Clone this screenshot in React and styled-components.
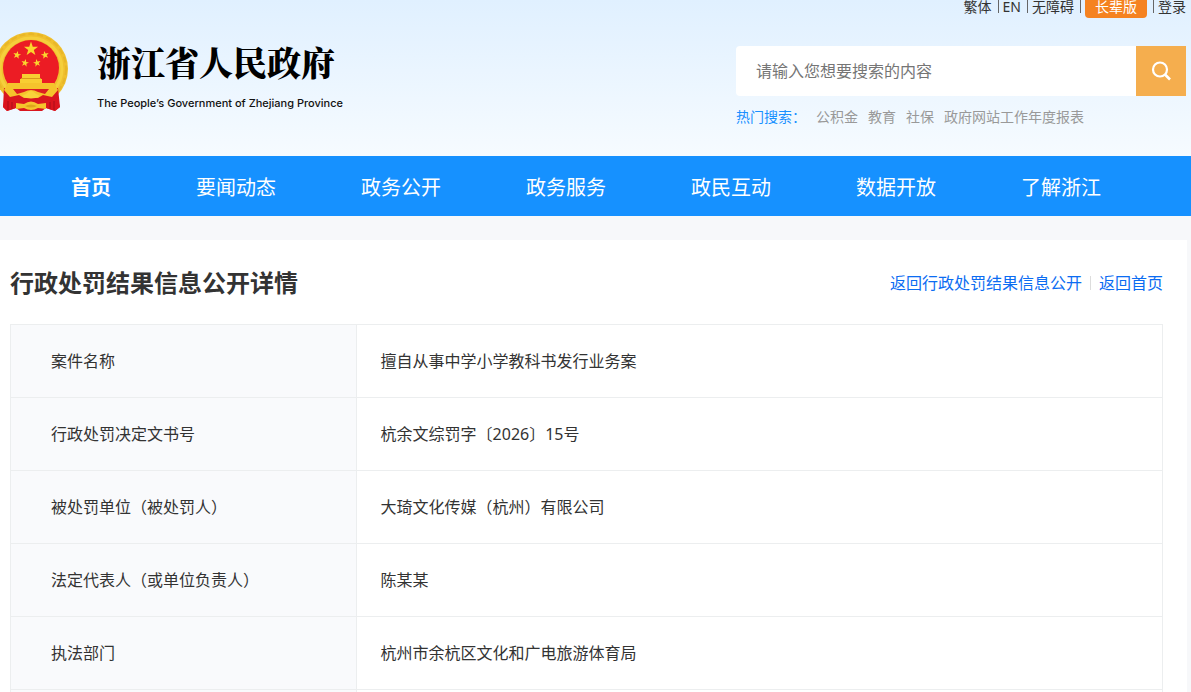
import { useState } from "react";
import styled, { createGlobalStyle } from "styled-components";

const GlobalStyle = createGlobalStyle`
  * {
    box-sizing: border-box;
  }
  body {
    margin: 0;
    background: #f7f8fa;
    color: #333;
    font-family: "Noto Sans", "Noto Sans CJK SC", sans-serif;
    font-size: 16px;
  }
  a {
    color: inherit;
    text-decoration: none;
  }
`;

const Header = styled.header`
  display: flex;
  justify-content: space-between;
  height: 156px;
  padding-right: 5px;
  background: linear-gradient(#e0f0ff, #f6fbff);
`;

const Brand = styled.a`
  display: flex;
  gap: 28px;
  padding-top: 32px;
`;

const BrandText = styled.div`
  display: flex;
  flex-direction: column;
  gap: 12px;
  padding-top: 7px;
  color: #000;
`;

const SiteName = styled.span`
  font-family: "Noto Serif CJK SC", "Liberation Serif", "Noto Sans CJK SC", serif;
  font-size: 34px;
  font-weight: 900;
  line-height: 46px;
`;

const SiteNameEn = styled.span`
  font-family: Inter, "Liberation Sans", sans-serif;
  font-size: 11px;
  font-weight: 500;
  line-height: 12px;
  color: #111;
`;

const HeaderSide = styled.div`
  display: flex;
  flex-direction: column;
  width: 450px;
`;

const TopLinks = styled.div`
  display: flex;
  justify-content: flex-end;
  height: 46px;
  font-size: 14px;
  line-height: 14px;
`;

const TopDivider = styled.i`
  width: 1px;
  height: 13px;
  margin: 0 4px 0 6px;
  background: #666;
`;

const ElderLink = styled.a`
  height: 18px;
  padding: 0 10px;
  border-radius: 0 0 4px 4px;
  background: #f58220;
  color: #fff;
`;

const SearchForm = styled.form`
  display: flex;
  height: 50px;
`;

const SearchInput = styled.input`
  flex: 1;
  min-width: 0;
  padding: 0 20px;
  border: 0;
  border-radius: 4px 0 0 4px;
  outline: 0;
  background: #fff;
  font: inherit;
  &::placeholder {
    color: #757575;
  }
`;

const SearchButton = styled.button`
  display: flex;
  align-items: center;
  justify-content: center;
  width: 50px;
  padding: 0;
  border: 0;
  background: #f5ae4e;
  cursor: pointer;
`;

const HotWords = styled.div`
  display: flex;
  gap: 10px;
  padding-top: 11px;
  color: #999;
  font-size: 14px;
  line-height: 20px;
`;

const HotLabel = styled.span`
  color: #1890ff;
`;

const Nav = styled.nav`
  display: flex;
  gap: 85px;
  padding: 4px 0 0 71px;
  background: #1691ff;
`;

const NavLink = styled.a`
  color: #fff;
  font-size: 20px;
  font-weight: ${({ $active }) => ($active ? 700 : 400)};
  line-height: 56px;
  white-space: nowrap;
`;

const Content = styled.main`
  margin: 24px 4px 0 0;
  padding: 0 24px 0 10px;
  background: #fff;
`;

const TitleBar = styled.div`
  display: flex;
  align-items: center;
  justify-content: space-between;
  height: 84px;
  padding-top: 2px;
`;

const Title = styled.h1`
  margin: 0;
  font-size: 24px;
  line-height: 36px;
`;

const BackLinks = styled.div`
  display: flex;
  align-items: center;
  gap: 8px;
  color: #0b6cf2;
  line-height: 24px;
`;

const BackDivider = styled.i`
  width: 1px;
  height: 14px;
  background: #ddd;
`;

const Table = styled.table`
  width: 100%;
  border-collapse: collapse;
  table-layout: fixed;
`;

const Label = styled.th`
  width: 30%;
  height: ${({ $blank }) => ($blank ? "2px" : "73px")};
  padding: 0 40px 2px;
  border: 1px solid #eceeef;
  border-bottom-width: ${({ $blank }) => ($blank ? 0 : "1px")};
  background: #f9fafc;
  font-weight: 400;
  text-align: left;
`;

const Value = styled.td`
  padding: 0 24px 2px;
  border: 1px solid #eceeef;
  border-bottom-width: ${({ $blank }) => ($blank ? 0 : "1px")};
`;

const NAV_ITEMS = ["首页", "要闻动态", "政务公开", "政务服务", "政民互动", "数据开放", "了解浙江"];
const HOT_WORDS = ["公积金", "教育", "社保", "政府网站工作年度报表"];
const DETAILS = [
  ["案件名称", "擅自从事中学小学教科书发行业务案"],
  ["行政处罚决定文书号", "杭余文综罚字〔2026〕15号"],
  ["被处罚单位（被处罚人）", "大琦文化传媒（杭州）有限公司"],
  ["法定代表人（或单位负责人）", "陈某某"],
  ["执法部门", "杭州市余杭区文化和广电旅游体育局"],
  ["", ""],
];

const STAR = "M0-10 2.4-3.1 9.5-3.1 3.8 1.2 5.9 8.1 0 4-5.9 8.1-3.8 1.2-9.5-3.1-2.4-3.1Z";

function Emblem() {
  return (
    <svg width="69" height="80" viewBox="0 0 69 80" aria-hidden="true">
      <circle cx="31" cy="37" r="37" fill="#f0c02e" />
      <circle cx="31" cy="37" r="35" fill="none" stroke="#e8b628" strokeWidth="2" strokeDasharray="6 3" />
      <circle cx="31" cy="37" r="31" fill="none" stroke="#f5cf3c" strokeWidth="3" />
      <circle cx="31" cy="36" r="28" fill="#ec1c24" />
      <g fill="#fbd62e">
        <path d={STAR} transform="translate(31 17) scale(.74)" />
        <path d={STAR} transform="translate(17 23) rotate(12) scale(.42)" />
        <path d={STAR} transform="translate(45 23) rotate(-12) scale(.42)" />
        <path d={STAR} transform="translate(25 31) rotate(12) scale(.4)" />
        <path d={STAR} transform="translate(37 31) rotate(-12) scale(.4)" />
      </g>
      <path d="M22 42h18v5h2v5H20v-5h2Z" fill="#f8ce32" />
      <path d="M21 46.5h20" stroke="#d99a1b" />
      <path d="M4 56Q31 60 58 56L60 75 55 79 46 76 42 79H20L16 76 7 79 3 75Z" fill="#d9161f" />
      <path d="M8 51h46l4 7-6 7-9-2-5 3H24l-5-3-9 2-6-7Z" fill="#f5c42c" />
      <path d="M13 57h36l-4 5-7-2q-7-4-14 0l-7 2Z" fill="#dc1d21" />
      <path d="M26 62q5-6 10 0l4 2q-9 5-18 0Z" fill="#f9d33b" />
      <path d="M16 71l8 1q7-5 14 0l8-1v6l-8-1q-7 4-14 0l-8 1Z" fill="#f5c42c" />
      <path d="M25 74q6-3 12 0-6 3-12 0Z" fill="#dfa51c" />
      <path d="M5 65q5 5 11 3v8l-9 3-4-4ZM57 65q-5 5-11 3v8l9 3 5-4Z" fill="#db151e" />
      <path d="M8 69v9M12 70v7M50 70v7M54 69v9" stroke="#a90f18" />
    </svg>
  );
}

function SearchIcon() {
  return (
    <svg width="20" height="20" viewBox="0 0 20 20" fill="none" stroke="#fff" strokeWidth="2.2" aria-hidden="true">
      <circle cx="9" cy="8.5" r="7" />
      <path d="m14 13.5 5 5" strokeWidth="2.6" />
    </svg>
  );
}

export default function App() {
  const [keyword, setKeyword] = useState("");

  return (
    <>
      <GlobalStyle />
      <Header>
        <Brand href="#">
          <Emblem />
          <BrandText>
            <SiteName>浙江省人民政府</SiteName>
            <SiteNameEn>The People’s Government of Zhejiang Province</SiteNameEn>
          </BrandText>
        </Brand>
        <HeaderSide>
          <TopLinks>
            <a href="#">繁体</a>
            <TopDivider />
            <a href="#">EN</a>
            <TopDivider />
            <a href="#">无障碍</a>
            <TopDivider />
            <ElderLink href="#">长辈版</ElderLink>
            <TopDivider />
            <a href="#">登录</a>
          </TopLinks>
          <SearchForm onSubmit={(e) => e.preventDefault()}>
            <SearchInput
              aria-label="请输入您想要搜索的内容"
              placeholder="请输入您想要搜索的内容"
              value={keyword}
              onChange={(e) => setKeyword(e.target.value)}
            />
            <SearchButton type="submit" aria-label="搜索">
              <SearchIcon />
            </SearchButton>
          </SearchForm>
          <HotWords>
            <HotLabel>热门搜索：</HotLabel>
            {HOT_WORDS.map((word) => (
              <a href="#" key={word}>
                {word}
              </a>
            ))}
          </HotWords>
        </HeaderSide>
      </Header>
      <Nav>
        {NAV_ITEMS.map((item, i) => (
          <NavLink href="#" key={item} $active={i === 0}>
            {item}
          </NavLink>
        ))}
      </Nav>
      <Content>
        <TitleBar>
          <Title>行政处罚结果信息公开详情</Title>
          <BackLinks>
            <a href="#">返回行政处罚结果信息公开</a>
            <BackDivider />
            <a href="#">返回首页</a>
          </BackLinks>
        </TitleBar>
        <Table>
          <tbody>
            {DETAILS.map(([label, value], i) => (
              <tr key={i}>
                <Label scope="row" $blank={!label}>
                  {label}
                </Label>
                <Value $blank={!label}>{value}</Value>
              </tr>
            ))}
          </tbody>
        </Table>
      </Content>
    </>
  );
}
